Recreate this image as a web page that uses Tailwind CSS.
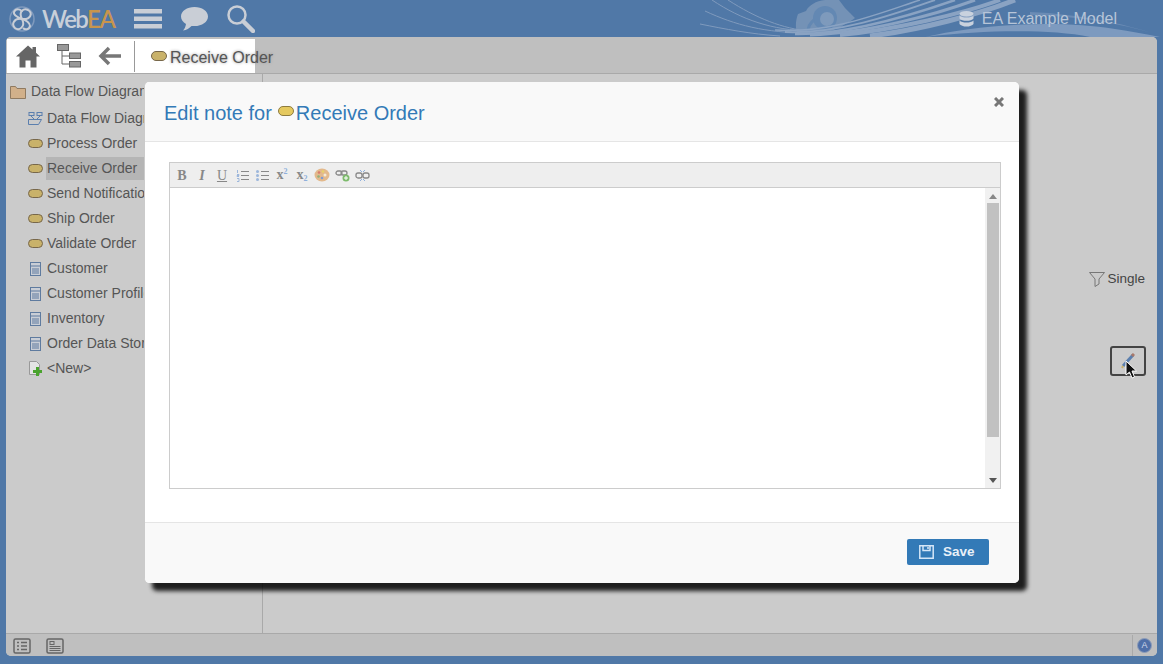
<!DOCTYPE html>
<html lang="en">
<head>
    <meta charset="UTF-8">
    <title>WebEA</title>
    <script src="https://cdn.jsdelivr.net/npm/@tailwindcss/browser@4"></script>
</head>
<body class="font-['Liberation_Sans',sans-serif]">
<div class="relative flex flex-col w-[1163px] h-[664px] overflow-hidden bg-[#5078a7]">

    <!-- header -->
    <header class="relative flex items-center h-[37px] shrink-0 pl-[9px]">
        <svg class="absolute left-[700px] top-0" width="463" height="37" viewBox="0 0 463 37" fill="none">
            <path d="M97 32c-2-5-1-13 1-18l8-3c3-6 10-10 19-11h14l6 8 5 5 5 5c-8 6-20 12-30 15-10 1-20 1-28-1z" fill="#7492b6"/>
            <circle cx="125" cy="18" r="12" fill="#6388b3"/>
            <circle cx="127" cy="19" r="7" fill="#7e9abc"/>
            <path d="M108 32c0-5 2-9 6-12" stroke="#6388b3" stroke-width="3"/>
            <g stroke="#7f9abd" stroke-width="1">
                <path d="M12 0c30 20 60 30 98 31"/>
                <path d="M28 0c28 18 55 29 82 31"/>
                <path d="M5 11c30 14 60 22 105 22"/>
                <path d="M0 24c25 5 50 10 80 12"/>
            </g>
            <g stroke="#8aa3c3">
                <path d="M75 30c55 4 105-17 145-30" stroke-width="1.500"/>
                <path d="M85 32c55 2 110-18 150-32" stroke-width="2"/>
                <path d="M95 34c55 1 120-20 160-34" stroke-width="2.500"/>
                <path d="M110 35c60-2 130-22 165-35" stroke-width="3"/>
                <path d="M140 35c55-5 125-22 160-35" stroke-width="4"/>
                <path d="M170 36c50-6 110-22 145-36" stroke-width="5"/>
            </g>
            <path d="M225 37c50-12 130-18 190-8 15 2 30 5 45 8h-70c-40-8-105-7-165 0z" fill="#7d9abf"/>
            <path d="M330 12c50 2 95 12 125 22-35-11-80-18-125-19z" fill="#6b8cb5"/>
        </svg>
        <svg class="relative shrink-0" width="26" height="26" viewBox="0 0 26 26" fill="none" stroke="#c9ced6" stroke-width="2">
            <circle cx="13" cy="13" r="12" stroke="#7f9abd" stroke-width="1.500"/>
            <path d="M13 13C9 5 15 2 19 4c5 3 3 10-6 9-8-1-11 5-7 9 4 3 11-1 7-9"/>
            <path d="M13 13C8 11 4 9 5 6c2-4 7-3 8 0M13 13c4 1 8 4 8 7-1 4-5 4-7 2"/>
        </svg>
        <span class="relative ml-[7px] w-[92px] shrink-0 font-['Lato',sans-serif] font-semibold text-[24px] tracking-[-1.500px] leading-none text-[#c8cfd9]">Web<span class="text-[#c8954d]">EA</span></span>
        <svg class="relative shrink-0" width="28" height="20" viewBox="0 0 28 20" fill="#c9ced6"><rect y="0" width="28" height="4.500"/><rect y="7.500" width="28" height="4.500"/><rect y="15" width="28" height="4.500"/></svg>
        <svg class="relative ml-[19px] shrink-0" width="27" height="24" viewBox="0 0 27 24" fill="#c9ced6"><path d="M13.500 0C6 0 0 4 0 9.500c0 3.200 2 5.800 5 7.500-.3 2.500-1.500 5-3 6.500 3.500-.5 6.500-2.500 8.500-4.600 1 .1 2 .2 3 .2C21 19.100 27 15 27 9.500S21 0 13.500 0z"/></svg>
        <svg class="relative ml-[18px] shrink-0" width="29" height="29" viewBox="0 0 29 29" fill="none" stroke="#c9ced6"><circle cx="11" cy="11" r="8.500" stroke-width="2.500"/><path d="M17.500 17.500l9.500 9.500" stroke-width="4.500" stroke-linecap="round"/></svg>
        <div class="relative ml-auto flex items-center pr-[46px] gap-[8px] text-[16px] text-[#b7c5d8]">
            <svg width="15" height="16" viewBox="0 0 15 16" fill="#c9d2de"><ellipse cx="7.500" cy="2.800" rx="7" ry="2.800"/><path d="M.5 4.500c1.500 1.500 4 2 7 2s5.500-.5 7-2v3c-1 1.500-4 2.300-7 2.300S1.500 9 .5 7.500z"/><path d="M.5 9.500c1.500 1.500 4 2 7 2s5.500-.5 7-2v3.500c-1 1.500-4 2.600-7 2.600S1.500 14.500.5 13z"/></svg>
            <span>EA Example Model</span>
        </div>
    </header>

    <!-- main panel -->
    <main class="flex flex-col ml-[6px] w-[1151px] h-[619px] rounded-[5px] overflow-hidden bg-[#cbcbcb] text-[#555]">
        <div class="flex h-[37px] shrink-0 pt-[2px] bg-[#bfbfbf] border-b border-[#a9a9a9]">
            <div class="flex items-center w-[248px] ml-px h-[34px] bg-white">
                <svg class="ml-[9px] shrink-0" width="24" height="23" viewBox="0 0 24 22" fill="#666"><path d="M12 0L0 11h3.500v11h6v-7h5v7h6V11H24l-4-3.700V1.500h-3.500v2.600z"/></svg>
                <svg class="ml-[17px] shrink-0" width="24" height="24" viewBox="0 0 24 24" fill="none" stroke="#666"><rect x=".5" y=".5" width="11" height="6" fill="#999"/><rect x="12.500" y="9" width="11" height="5.500" fill="#999"/><rect x="12.500" y="17.500" width="11" height="5.500" fill="#999"/><path d="M5 7v13h7M5 12h7"/></svg>
                <svg class="ml-[17px] shrink-0" width="24" height="20" viewBox="0 0 24 20" fill="none" stroke="#777" stroke-width="3.500"><path d="M23 10H4M11 2l-8 8 8 8"/></svg>
                <div class="ml-[12px] h-[31px] w-px shrink-0 bg-[#999]"></div>
                <svg class="ml-[16px] shrink-0" width="16" height="10" viewBox="0 0 16 10"><rect x=".5" y=".5" width="15" height="9" rx="4.500" fill="#c9b26a" stroke="#77674a"/></svg>
                <span class="ml-[3px] mt-[4px] text-[16px] whitespace-nowrap [text-shadow:0_0_3px_#999]">Receive Order</span>
            </div>
        </div>

        <div class="flex flex-1 min-h-0">
            <!-- tree -->
            <aside class="w-[257px] shrink-0 border-r border-[#a9a9a9] pt-[5px] pl-[4px] text-[14px]">
                <div class="flex items-center h-[25px] gap-[5px]">
                    <svg width="16" height="14" viewBox="0 0 16 14"><path d="M.5 13.500V1.500h5l1.500 2h8.500v10z" fill="#d1b08a" stroke="#8f7a61"/></svg>
                    <span class="whitespace-nowrap">Data Flow Diagram</span>
                </div>
                <ul class="pl-[18px] pt-[2px]">
                    <li class="flex items-center h-[25px] gap-[3px]">
                        <svg class="shrink-0" width="15" height="13" viewBox="0 0 15 13" fill="none" stroke="#5b7fae"><rect x="1" y=".5" width="5" height="3"/><rect x="9" y=".5" width="5" height="3"/><path d="M3 4l3 3M12 4L9 7M.5 7.500h13l-3 5h-10z"/></svg>
                        <span class="px-px whitespace-nowrap">Data Flow Diagram</span>
                    </li>
                    <li class="flex items-center h-[25px] gap-[3px]">
                        <svg class="shrink-0" width="15" height="9" viewBox="0 0 15 9"><rect x=".5" y=".5" width="14" height="8" rx="4" fill="#c9b26a" stroke="#77674a"/></svg>
                        <span class="px-px whitespace-nowrap">Process Order</span>
                    </li>
                    <li class="flex items-center h-[25px] gap-[3px]">
                        <svg class="shrink-0" width="15" height="9" viewBox="0 0 15 9"><rect x=".5" y=".5" width="14" height="8" rx="4" fill="#c9b26a" stroke="#77674a"/></svg>
                        <span class="px-px w-[98px] leading-[23px] bg-[#b5b5b5] whitespace-nowrap">Receive Order</span>
                    </li>
                    <li class="flex items-center h-[25px] gap-[3px]">
                        <svg class="shrink-0" width="15" height="9" viewBox="0 0 15 9"><rect x=".5" y=".5" width="14" height="8" rx="4" fill="#c9b26a" stroke="#77674a"/></svg>
                        <span class="px-px whitespace-nowrap">Send Notification</span>
                    </li>
                    <li class="flex items-center h-[25px] gap-[3px]">
                        <svg class="shrink-0" width="15" height="9" viewBox="0 0 15 9"><rect x=".5" y=".5" width="14" height="8" rx="4" fill="#c9b26a" stroke="#77674a"/></svg>
                        <span class="px-px whitespace-nowrap">Ship Order</span>
                    </li>
                    <li class="flex items-center h-[25px] gap-[3px]">
                        <svg class="shrink-0" width="15" height="9" viewBox="0 0 15 9"><rect x=".5" y=".5" width="14" height="8" rx="4" fill="#c9b26a" stroke="#77674a"/></svg>
                        <span class="px-px whitespace-nowrap">Validate Order</span>
                    </li>
                    <li class="flex items-center h-[25px] gap-[3px]">
                        <svg class="shrink-0" width="15" height="14" viewBox="0 0 15 14" fill="none" stroke="#5f7b9f"><rect x="2.500" y=".5" width="10" height="13" fill="#c9ced6"/><path d="M2.500 4h10M4 7h7M4 9h7M4 11h7"/></svg>
                        <span class="px-px whitespace-nowrap">Customer</span>
                    </li>
                    <li class="flex items-center h-[25px] gap-[3px]">
                        <svg class="shrink-0" width="15" height="14" viewBox="0 0 15 14" fill="none" stroke="#5f7b9f"><rect x="2.500" y=".5" width="10" height="13" fill="#c9ced6"/><path d="M2.500 4h10M4 7h7M4 9h7M4 11h7"/></svg>
                        <span class="px-px whitespace-nowrap">Customer Profile</span>
                    </li>
                    <li class="flex items-center h-[25px] gap-[3px]">
                        <svg class="shrink-0" width="15" height="14" viewBox="0 0 15 14" fill="none" stroke="#5f7b9f"><rect x="2.500" y=".5" width="10" height="13" fill="#c9ced6"/><path d="M2.500 4h10M4 7h7M4 9h7M4 11h7"/></svg>
                        <span class="px-px whitespace-nowrap">Inventory</span>
                    </li>
                    <li class="flex items-center h-[25px] gap-[3px]">
                        <svg class="shrink-0" width="15" height="14" viewBox="0 0 15 14" fill="none" stroke="#5f7b9f"><rect x="2.500" y=".5" width="10" height="13" fill="#c9ced6"/><path d="M2.500 4h10M4 7h7M4 9h7M4 11h7"/></svg>
                        <span class="px-px whitespace-nowrap">Order Data Store</span>
                    </li>
                    <li class="flex items-center h-[25px] gap-[3px]">
                        <svg class="shrink-0" width="15" height="15" viewBox="0 0 15 15"><path d="M1.500.5h7l3 3v10h-10z" fill="#e4e4e4" stroke="#999"/><path d="M8 6h3v3h3v3h-3v3H8v-3H5V9h3z" fill="#4aa32e"/></svg>
                        <span class="px-px whitespace-nowrap">&lt;New&gt;</span>
                    </li>
                </ul>
            </aside>

            <!-- properties side -->
            <section class="flex flex-col items-end flex-1 pr-[11px] pt-[195px]">
                <div class="flex items-center mr-px gap-[2px] text-[13.500px] text-[#444]">
                    <svg width="16" height="15" viewBox="0 0 16 15" fill="none" stroke="#777"><path d="M.5.5h15L10 7v5l-4 2.500V7z"/></svg>
                    <span>Single</span>
                </div>
                <div class="flex items-center justify-center mt-[57px] w-[36px] h-[30px] border-2 border-[#444] rounded-[3px]">
                    <svg width="14" height="16" viewBox="0 0 14 16" fill="none"><path d="M2 13L12 2" stroke="#5b7fae" stroke-width="3"/><path d="M11 3l2-2" stroke="#a8786a" stroke-width="3"/><path d="M2 13l-1 2" stroke="#c9b26a" stroke-width="2"/></svg>
                </div>
            </section>
        </div>

        <!-- status bar -->
        <footer class="flex items-center h-[23px] shrink-0 pl-[7px] pt-px bg-[#bfbfbf] border-t border-[#a9a9a9]">
            <svg width="18" height="16" viewBox="0 0 18 16" fill="none" stroke="#666"><rect x="1" y="1" width="16" height="14" rx="1.500" stroke-width="1.500"/><path d="M4 4.500h2M8 4.500h6M4 8h2M8 8h6M4 11.500h2M8 11.500h6" stroke-width="1.500"/></svg>
            <svg class="ml-[15px]" width="18" height="16" viewBox="0 0 18 16" fill="none" stroke="#666"><rect x="1" y="1" width="16" height="14" rx="1.500" stroke-width="1.500"/><rect x="4" y="3.500" width="4" height="3"/><path d="M3.500 8.500h11M3.500 10.500h11M3.500 12.500h11"/></svg>
            <div class="ml-auto flex items-center h-full w-[25px] border-l border-[#a9a9a9] pl-[4px]">
                <div class="flex items-center justify-center w-[15px] h-[15px] rounded-full bg-[#4f6fa8] border border-[#8c9cb8] text-[9px] leading-none text-[#cfd8e8]">A</div>
            </div>
        </footer>
    </main>

    <!-- cursor over the edit button -->
    <svg class="absolute left-[1125px] top-[360px]" width="12" height="19" viewBox="0 0 12 19"><path d="M1 1v14l3.500-3 2.500 6 2.500-1-2.500-6h4.500z" fill="#111" stroke="#fff"/></svg>

    <!-- modal -->
    <div class="absolute left-[144px] top-[82px] flex flex-col w-[875px] h-[501px] rounded-[5px] overflow-hidden bg-white border-l border-[#cbcbcb] shadow-[8px_8px_4px_rgba(0,0,0,0.85)]">
        <div class="relative flex items-center h-[60px] shrink-0 pl-[19px] pt-[2px] bg-[#f9f9f9] border-b border-[#e5e5e5] text-[20px] text-[#337ab7]">
            <span>Edit note for</span>
            <svg class="ml-[6px] mb-[3px]" width="16" height="10" viewBox="0 0 16 10"><rect x=".5" y=".5" width="15" height="9" rx="4.500" fill="#e5c95f" stroke="#8d7b3f"/></svg>
            <span class="ml-[2px]">Receive Order</span>
            <svg class="absolute right-[15px] top-[15px]" width="10" height="10" viewBox="0 0 10 10" stroke="#777" stroke-width="3"><path d="M1 1l8 8M9 1L1 9"/></svg>
        </div>
        <div class="flex-1 pl-[24px] pt-[20px]">
            <div class="flex flex-col w-[832px] h-[327px] border border-[#ccc]">
                <div class="flex items-center h-[25px] shrink-0 pl-[2px] bg-[#eee] border-b border-[#ccc] text-[#888]">
                    <span class="flex justify-center w-[20px] font-['Liberation_Serif',serif] font-bold text-[14px]">B</span>
                    <span class="flex justify-center w-[20px] font-['Liberation_Serif',serif] italic font-bold text-[14px]">I</span>
                    <span class="flex justify-center w-[20px] font-['Liberation_Serif',serif] underline text-[14px]">U</span>
                    <span class="flex justify-center w-[20px]"><svg width="13" height="13" viewBox="0 0 13 13"><path d="M5 2.500h8M5 6.500h8M5 10.500h8" stroke="#888"/><path d="M1.500 1v3M1 5.500h2v1H1v1h2M1 9.500h2v3H1" stroke="#9db7dc" fill="none"/></svg></span>
                    <span class="flex justify-center w-[20px]"><svg width="13" height="13" viewBox="0 0 13 13"><path d="M5 2.500h8M5 6.500h8M5 10.500h8" stroke="#888"/><circle cx="1.500" cy="2.500" r="1.500" fill="#9db7dc"/><circle cx="1.500" cy="6.500" r="1.500" fill="#9db7dc"/><circle cx="1.500" cy="10.500" r="1.500" fill="#9db7dc"/></svg></span>
                    <span class="flex justify-center w-[20px] font-['Liberation_Serif',serif] font-bold text-[14px] leading-none">x<sup class="text-[8px] leading-none text-[#8fb0dc] top-0">2</sup></span>
                    <span class="flex justify-center w-[20px] font-['Liberation_Serif',serif] font-bold text-[14px] leading-none">x<sub class="text-[8px] leading-none text-[#8fb0dc] top-[7px]">2</sub></span>
                    <span class="flex justify-center w-[20px]"><svg width="16" height="14" viewBox="0 0 16 14"><ellipse cx="8" cy="7" rx="7.500" ry="6.500" fill="#e3b98c"/><circle cx="5" cy="4.500" r="1.300" fill="#d97a6c"/><circle cx="9" cy="3.500" r="1.300" fill="#e8d26a"/><circle cx="4.500" cy="8.500" r="1.300" fill="#8fb07a"/><circle cx="8" cy="10" r="1.300" fill="#7f9bd0"/><circle cx="11" cy="7" r="1.500" fill="#f3ead8"/></svg></span>
                    <span class="flex justify-center w-[20px]"><svg width="15" height="13" viewBox="0 0 15 13" fill="none"><rect x="1" y="2" width="6" height="4" rx="2" stroke="#888" stroke-width="1.300"/><rect x="6" y="2" width="6" height="4" rx="2" stroke="#888" stroke-width="1.300"/><circle cx="11" cy="9" r="3.500" fill="#7dbb6c"/><path d="M11 7v4M9 9h4" stroke="#fff"/></svg></span>
                    <span class="flex justify-center w-[20px]"><svg width="15" height="13" viewBox="0 0 15 13" fill="none"><rect x="1" y="4" width="6" height="5" rx="2" stroke="#888" stroke-width="1.300"/><rect x="8" y="4" width="6" height="5" rx="2" stroke="#888" stroke-width="1.300"/><path d="M5 1l2 2M10 1L8 3M5 12l2-2M10 12l-2-2" stroke="#8fb0dc"/></svg></span>
                </div>
                <div class="flex flex-1 min-h-0 justify-end bg-white">
                    <div class="flex flex-col items-center w-[15px] bg-[#f1f1f1]">
                        <div class="mt-[6px] w-0 h-0 border-x-[4px] border-x-transparent border-b-[5px] border-b-[#888]"></div>
                        <div class="mt-[4px] w-[12px] h-[234px] bg-[#c1c1c1]"></div>
                        <div class="mt-auto mb-[5px] w-0 h-0 border-x-[4px] border-x-transparent border-t-[5px] border-t-[#555]"></div>
                    </div>
                </div>
            </div>
        </div>
        <div class="flex items-center justify-end h-[61px] shrink-0 pr-[30px] pb-[2px] bg-[#f9f9f9] border-t border-[#e5e5e5]">
            <button class="flex items-center w-[82px] h-[26px] pl-[12px] gap-[9px] rounded-[2px] bg-[#337ab7] text-[13.500px] font-bold text-[#e8f0f8]">
                <svg width="15" height="14" viewBox="0 0 15 14" fill="none" stroke="#d5e6f7" stroke-width="1.500"><path d="M.8.8h13.400v12.400H.8z"/><path d="M4 1v4.500h7V1M9 2v2"/></svg>
                <span>Save</span>
            </button>
        </div>
    </div>
</div>
</body>
</html>
